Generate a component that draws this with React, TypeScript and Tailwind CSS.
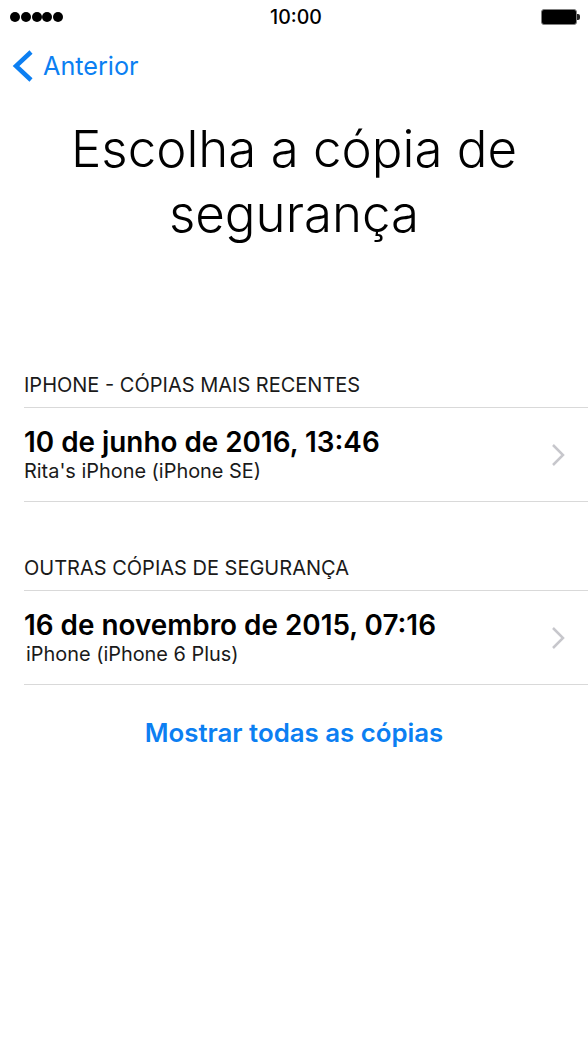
function Chevron() {
  return (
    <svg width="16" height="24" viewBox="0 0 16 24" fill="none" stroke="#c7c7cc" strokeWidth="2.5" className="mr-[2px]">
      <path d="M3 2l10 10L3 22" />
    </svg>
  );
}

function BackupRow({ title, device, indent }: { title: string; device: string; indent?: boolean }) {
  return (
    <div className="flex h-[94px] items-center justify-between border-b border-[#d9d9d9] pr-[20px]">
      <div>
        <div className="text-[27.85px] leading-[33px] font-semibold text-black">{title}</div>
        <div className={`text-[19.9px] leading-[25px] text-[#1a1a1a] ${indent ? 'pl-[2px]' : ''}`}>{device}</div>
      </div>
      <Chevron />
    </div>
  );
}

export default function App() {
  return (
    <div className="flex h-[1045px] w-[588px] flex-col bg-white font-['Inter','Liberation_Sans',sans-serif]">
      <div className="flex h-[32px] items-center justify-between pt-[2px] pr-[8px] pl-[10px]">
        <div className="flex w-[126px] gap-[0.75px]">
          <span className="h-[10px] w-[10px] rounded-full bg-black" />
          <span className="h-[10px] w-[10px] rounded-full bg-black" />
          <span className="h-[10px] w-[10px] rounded-full bg-black" />
          <span className="h-[10px] w-[10px] rounded-full bg-black" />
          <span className="h-[10px] w-[10px] rounded-full bg-black" />
        </div>
        <span className="mt-[1px] text-[19.5px] font-medium text-black">10:00</span>
        <div className="flex w-[124px] items-center justify-end">
          <div className="h-[16px] w-[36px] rounded-[3px] border-[1.5px] border-[#808080] bg-black" />
          <div className="h-[6px] w-[3px] rounded-r-[2px] bg-[#222222]" />
        </div>
      </div>
      <div className="mt-[15px] flex h-[38px] items-center pl-[12px] text-[#0c7ff2]">
        <svg width="24" height="38" viewBox="0 0 24 38" fill="none" stroke="currentColor" strokeWidth="4.5">
          <path d="M19 5 4 19l15 14" />
        </svg>
        <span className="ml-[7px] text-[25.2px] leading-[30px]">Anterior</span>
      </div>
      <h1 className="mt-[31px] text-center text-[51px] leading-[65px] font-light text-black">
        Escolha a cópia de
        <br />
        segurança
      </h1>
      <div className="mt-[122px] pl-[24px]">
        <div className="flex h-[40px] items-center border-b border-[#d9d9d9] pb-[6px] text-[20px] text-[#1a1a1a]">IPHONE - CÓPIAS MAIS RECENTES</div>
        <BackupRow title="10 de junho de 2016, 13:46" device="Rita's iPhone (iPhone SE)" />
        <div className="mt-[49px] flex h-[40px] items-center border-b border-[#d9d9d9] pb-[6px] text-[20px] text-[#1a1a1a]">OUTRAS CÓPIAS DE SEGURANÇA</div>
        <BackupRow title="16 de novembro de 2015, 07:16" device="iPhone (iPhone 6 Plus)" indent />
      </div>
      <div className="mt-[29px] text-center text-[25.8px] font-semibold text-[#0c7ff2]">Mostrar todas as cópias</div>
    </div>
  );
}
